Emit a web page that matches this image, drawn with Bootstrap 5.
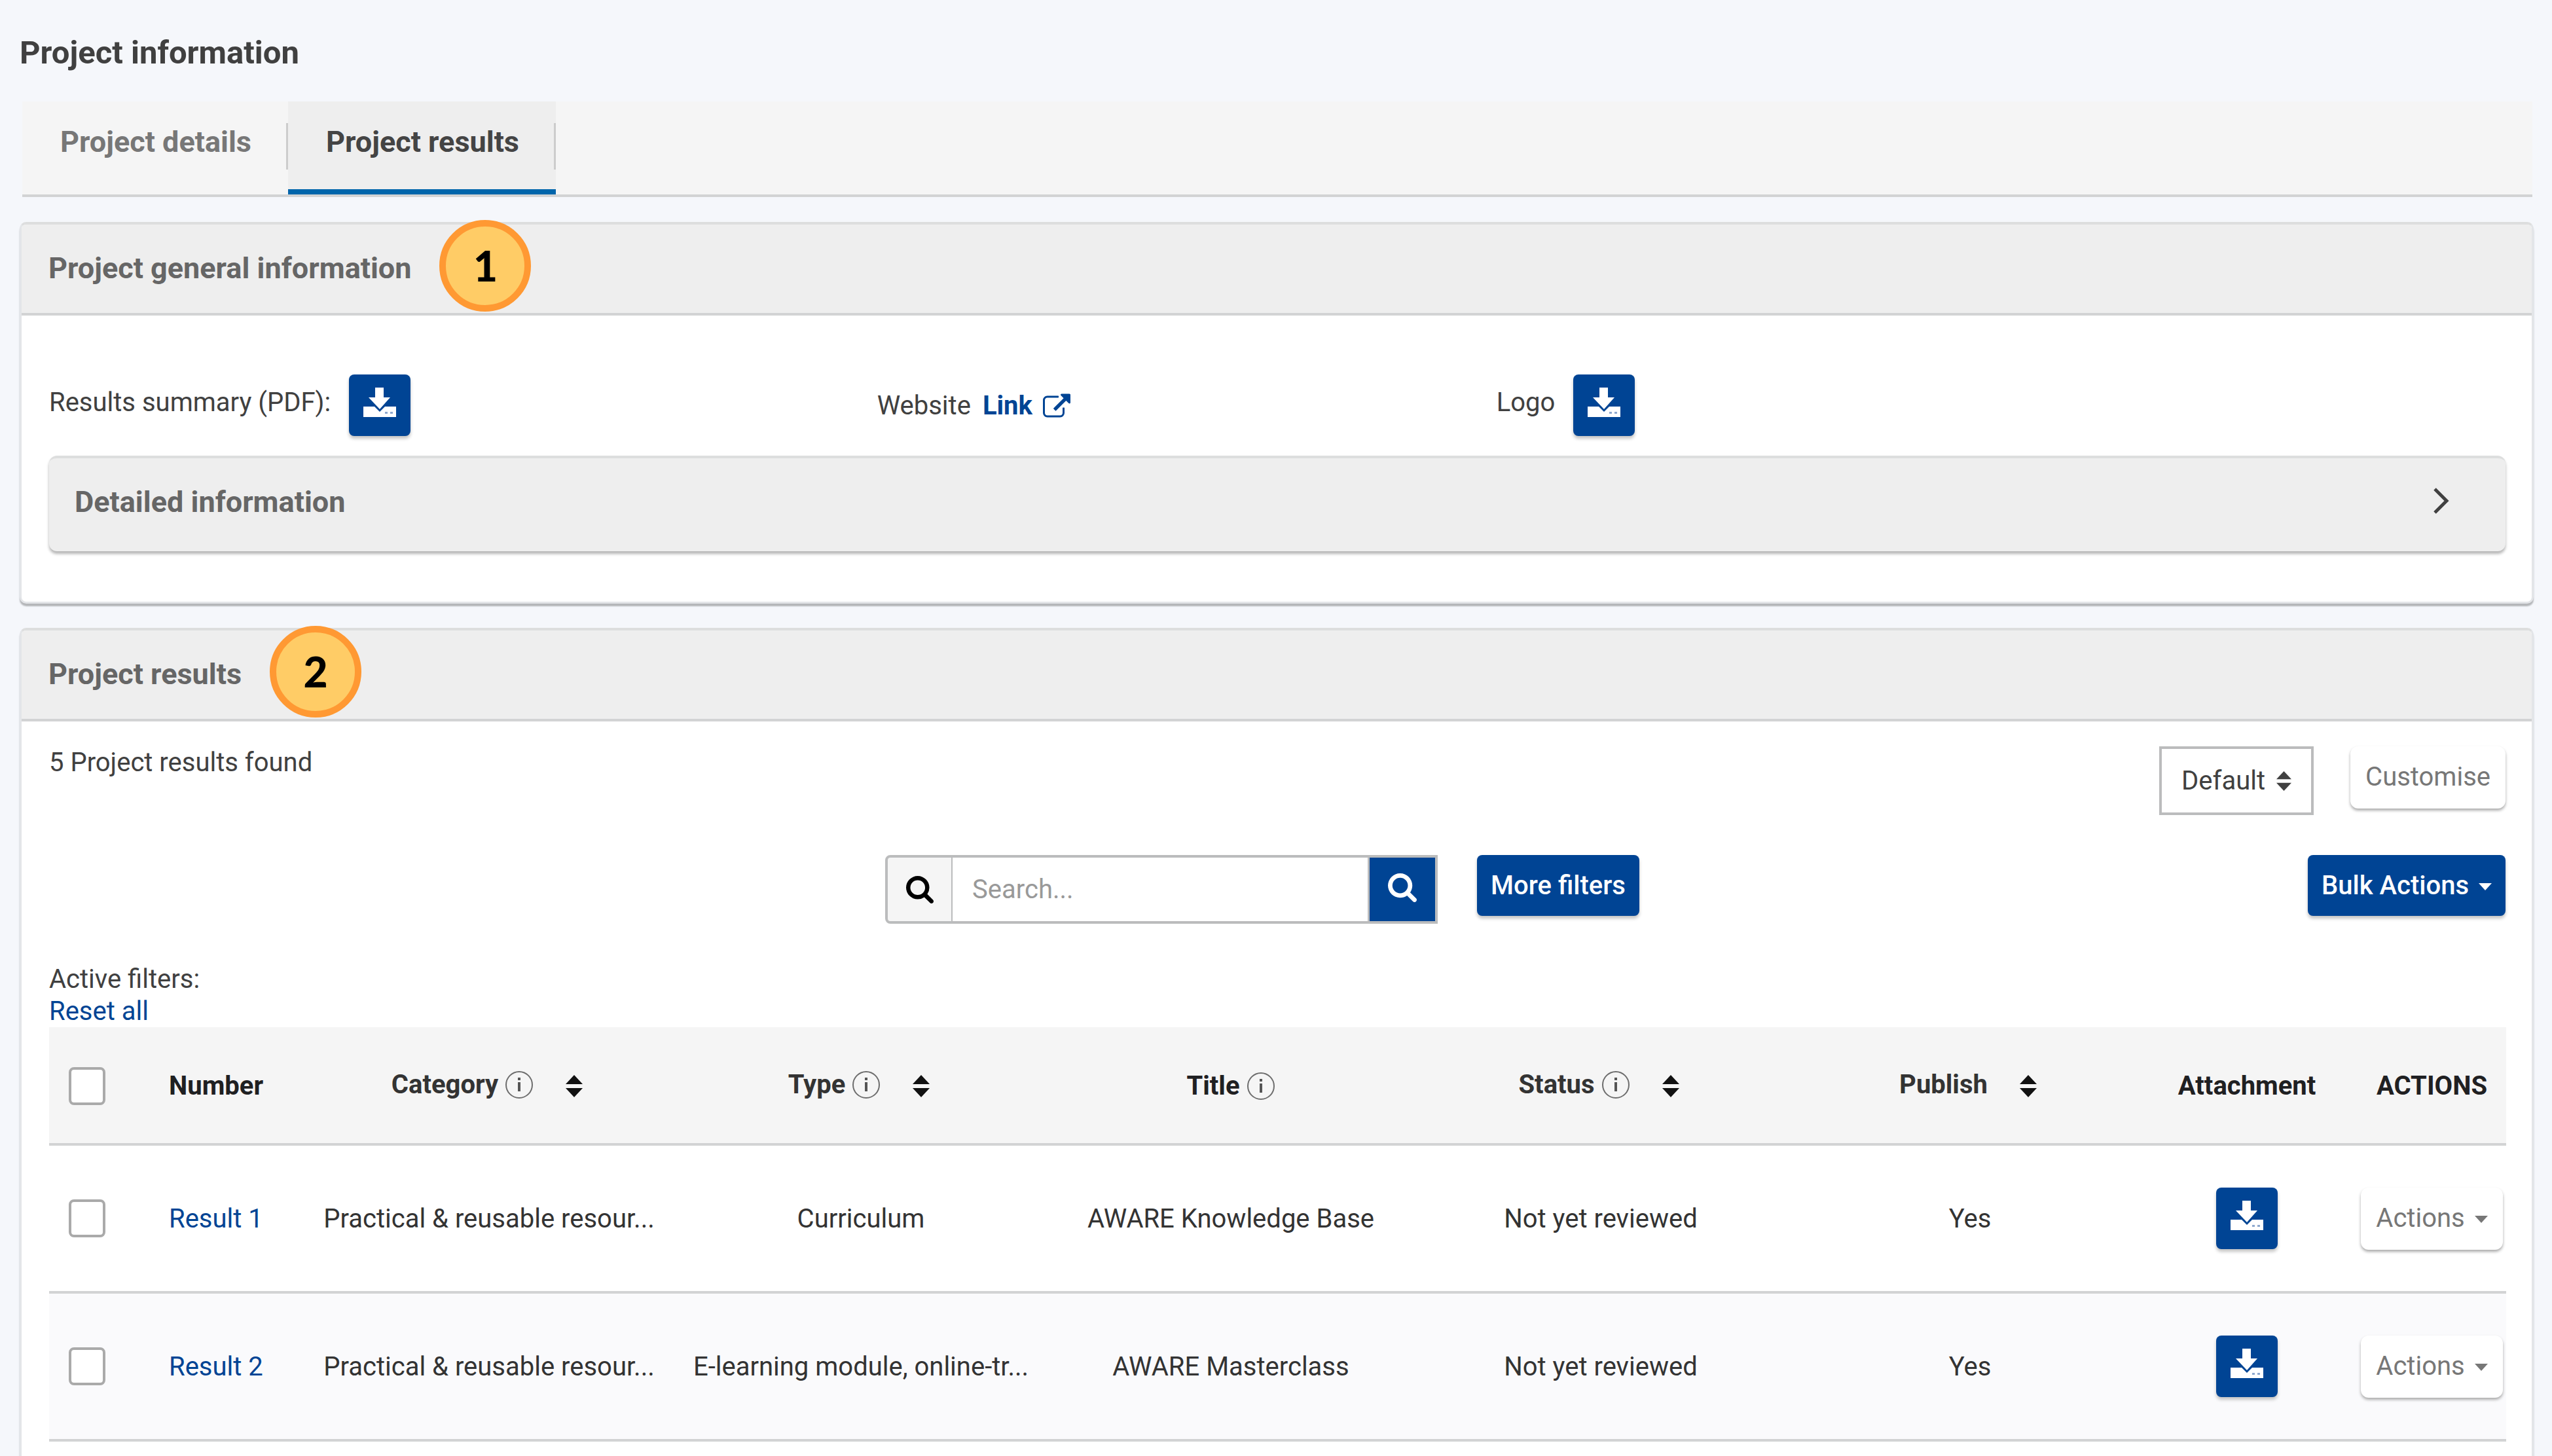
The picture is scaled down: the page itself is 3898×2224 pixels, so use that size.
<!DOCTYPE html>
<html lang="en">
<head>
<meta charset="utf-8">
<meta name="viewport" content="width=device-width, initial-scale=1">
<title>Project information</title>
<link href="https://cdn.jsdelivr.net/npm/bootstrap@5.3.0/dist/css/bootstrap.min.css" rel="stylesheet">
<style>
  :root { --brand: #004494; --line: #d2d3d4; --field: #bbbcbd; --ink: #404040; }
  body { background: #f5f7fb; color: var(--ink); font-family: Roboto, "Liberation Sans", sans-serif; font-size: 40px; line-height: 49px; padding: 53px 28px 0 30px; }
  a { color: var(--brand); text-decoration: none; }
  .page-title { font-size: 49px; line-height: 56px; font-weight: 700; margin: 0 0 46px; }
  .section-title { font-size: 45px; line-height: 56px; font-weight: 700; color: #666; margin: 0; }

  /* tabs */
  .tab-strip { background: #f5f5f5; border-bottom: 4px solid var(--line); margin: 0 2px 38px 4px; }
  .tab-strip .nav-link { position: relative; height: 142px; padding: 34px 56px 0 58px; font-size: 45px; line-height: 56px; font-weight: 700; color: #777; }
  .tab-strip .nav-link::after { content: ""; position: absolute; right: 0; top: 33px; width: 3px; height: 71px; background: #ccc; }
  .tab-strip .nav-link.active { color: #444; background: #eee; border-bottom: 8px solid #0065ab; }

  /* panels */
  .panel { background: #fff; border: 3px solid #e3e5e8; border-top: 4px solid #dddede; border-radius: 10px; box-shadow: 0 4px 2px #b4b6b9; }
  .panel + .panel { margin-top: 37px; }
  .panel-top { background: #eee; border-bottom: 4px solid var(--line); border-radius: 6px 6px 0 0; padding: 39px 40px 40px 41px; }
  .panel-inner { padding: 0 40px 0 42px; }
  .step { position: absolute; left: 100%; top: calc(50% - 74px); width: 140px; height: 140px; margin-left: 43px; border: 10px solid #ff9933; border-radius: 50%; background: #ffcc66; color: #000; font: 900 64px/120px Lato, sans-serif; text-align: center; }
  .facts { display: grid; grid-template-columns: 1266fr 947fr 1543fr; align-items: center; padding: 90px 0 30px; }
  .fact { display: flex; align-items: center; gap: 28px; }
  .fact > .raised { padding-bottom: 10px; }
  .fact-link { gap: 18px; }
  .fold { display: flex; justify-content: space-between; align-items: flex-start; width: 100%; height: 146px; padding: 39px 84px 0 39px; border: 0 solid #dddede; border-top-width: 4px; border-radius: 12px; background: #eee; box-shadow: 0 4px 4px #b5b5b5; margin-bottom: 77px; text-align: left; }

  /* buttons */
  .act { font-size: 40px; line-height: 49px; border: 0; border-radius: 8px; padding: 22px 21px; white-space: nowrap; }
  .act-main { background: var(--brand); color: #fff; font-weight: 500; box-shadow: 0 4px 5px #c4c4c4; }
  .act-plain { background: #fff; color: #777; padding: 22px 23px 24px; border-radius: 12px; box-shadow: 0 3px 4px #aaa; }
  .act-icon { width: 94px; height: 94px; padding: 20px 0 29px; }
  .act-icon svg { display: block; margin: 0 auto; }
  .act.dropdown-toggle::after { border-top: 11px solid; border-right: 10px solid transparent; border-left: 10px solid transparent; margin-left: 15px; vertical-align: 6px; }

  /* list tools */
  .tools { padding-top: 38px; }
  .picker { position: relative; margin-right: 56px; }
  .picker select { appearance: none; width: 236px; height: 105px; border: 4px solid var(--field); background: #fff; color: var(--ink); padding: 0 30px; }
  .picker svg { position: absolute; right: 34px; top: 37px; pointer-events: none; }
  .finder-row { display: grid; grid-template-columns: 1fr auto 1fr; align-items: start; padding-top: 61px; }
  .finder { width: 844px; height: 105px; flex-wrap: nowrap; }
  .finder .input-group-text { width: 104px; justify-content: center; background: #f5f5f5; border: 4px solid var(--field); border-radius: 8px 0 0 8px; border-right-width: 3px; color: #000; }
  .finder .form-control { font-size: 40px; border: 4px solid var(--field); border-left: 0; padding: 0 30px; color: var(--ink); }
  .finder .form-control::placeholder { color: #999; }
  .finder .btn { width: 104px; padding: 0 0 6px; background: var(--brand); color: #fff; border: 4px solid var(--field); border-left: 0; border-radius: 0; }
  .more { margin: 0 46px 0 60px; }
  .filters { padding-top: 60px; }

  /* results table */
  .results { table-layout: fixed; border-collapse: separate; border-spacing: 0; width: 100%; margin: 0; color: #333; }
  .results th, .results td { text-align: center; vertical-align: middle; padding: 0; border-bottom: 4px solid var(--line); white-space: nowrap; }
  .results th { height: 181px; padding-top: 2px; background: #f5f5f5; color: #1f2022; font-weight: 700; }
  .results td { height: 226px; background: #fff; }
  .results tbody tr:nth-child(even) td { background: #fafafc; }
  .results .start { text-align: left; }
  .results .pick { text-align: left; padding-left: 30px; }
  .results .form-check-input { display: block; width: 56px; height: 58px; margin: 0; border: 4px solid #aaa; border-radius: 8px; background-color: #fff; }
  .head { display: inline-flex; align-items: center; color: inherit; }
  .head svg.info { margin-left: 10px; }
  .head-sort { color: #333; font-weight: 700; padding: 0 6px 4px 0; border: 0; background: none; }
  .head-sort svg.sort { margin: 5px 0 0 49px; color: #111; }
</style>
</head>
<body class="d-flex flex-column min-vh-100">

<svg class="d-none" aria-hidden="true">
  <symbol id="i-download" viewBox="0 0 50 45">
    <path fill="currentColor" d="M18 0h13v15h10L25 33 8 15h10zM0 29h17l8 8 8-8h17v16H0z"/>
    <path fill="#8fa9cf" d="M33 37h4v3h-4zM41 37h4v3h-4z"/>
  </symbol>
  <symbol id="i-search" viewBox="64 128 1664 1664">
    <path fill="currentColor" d="M1216 832q0-185-131.500-316.500t-316.500-131.500-316.500 131.500-131.500 316.500 131.500 316.500 316.500 131.500 316.500-131.500 131.500-316.500zm512 832q0 52-38 90t-90 38q-54 0-90-38l-343-342q-179 124-399 124-143 0-273.500-55.500t-225-150-150-225-55.500-273.500 55.500-273.500 150-225 225-150 273.500-55.500 273.500 55.500 225 150 150 225 55.500 273.500q0 220-124 399l343 343q37 37 37 90z"/>
  </symbol>
  <symbol id="i-info" viewBox="0 0 44 44">
    <circle cx="22" cy="22" r="20" fill="none" stroke="#6d6d6d" stroke-width="2"/>
    <path fill="#555" d="M20 11h4v4h-4zM20 18h4v14h-4z"/>
  </symbol>
  <symbol id="i-sort" viewBox="0 0 26 34">
    <path fill="currentColor" d="M13 0l13 14H0zM13 34L0 20h26z"/>
  </symbol>
</svg>

<h1 class="page-title">Project information</h1>

<nav class="nav tab-strip" aria-label="Project">
  <a class="nav-link" href="#details">Project details</a>
  <a class="nav-link active" href="#results" aria-current="page">Project results</a>
</nav>

<section class="panel">
  <header class="panel-top d-flex">
    <h2 class="section-title position-relative">Project general information<span class="step">1</span></h2>
  </header>
  <div class="panel-inner">
    <div class="facts">
      <div class="fact">
        <span class="raised">Results summary (PDF):</span>
        <button type="button" class="btn act act-main act-icon" aria-label="Download results summary"><svg width="50" height="45"><use href="#i-download"/></svg></button>
      </div>
      <div class="fact fact-link">
        <span>Website</span>
        <a href="#website" class="fw-bold d-flex align-items-center">Link
          <svg class="ms-3" width="42" height="37" viewBox="0 0 1792 1536" aria-hidden="true"><path fill="currentColor" d="M1408 928v320q0 119-84.500 203.500t-203.500 84.500h-832q-119 0-203.500-84.500t-84.500-203.500v-832q0-119 84.500-203.500t203.500-84.500h704q14 0 23 9t9 23v64q0 14-9 23t-23 9h-704q-66 0-113 47t-47 113v832q0 66 47 113t113 47h832q66 0 113-47t47-113v-320q0-14 9-23t23-9h64q14 0 23 9t9 23zm384-864v512q0 26-19 45t-45 19-45-19l-176-176-652 652q-10 10-23 10t-23-10l-114-114q-10-10-10-23t10-23l652-652-176-176q-19-19-19-45t19-45 45-19h512q26 0 45 19t19 45z"/></svg></a>
      </div>
      <div class="fact">
        <span class="raised">Logo</span>
        <button type="button" class="btn act act-main act-icon" aria-label="Download logo"><svg width="50" height="45"><use href="#i-download"/></svg></button>
      </div>
    </div>
    <button type="button" class="fold" aria-expanded="false">
      <span class="section-title">Detailed information</span>
      <svg class="mt-1" width="28" height="44" viewBox="0 0 28 44" aria-hidden="true"><path d="M4 4l18 18L4 40" fill="none" stroke="#404040" stroke-width="5"/></svg>
    </button>
  </div>
</section>

<section class="panel flex-grow-1 border-bottom-0 rounded-bottom-0">
  <header class="panel-top d-flex">
    <h2 class="section-title position-relative">Project results<span class="step">2</span></h2>
  </header>
  <div class="panel-inner">
    <div class="tools d-flex align-items-start">
      <div class="me-auto">5 Project results found</div>
      <div class="picker">
        <select aria-label="View"><option>Default</option></select>
        <svg width="23" height="32"><use href="#i-sort"/></svg>
      </div>
      <button type="button" class="btn act act-plain">Customise</button>
    </div>

    <div class="finder-row">
      <div></div>
      <form class="d-flex align-items-start">
        <div class="input-group finder">
          <label class="input-group-text" for="q" aria-label="Search"><svg width="42" height="42"><use href="#i-search"/></svg></label>
          <input id="q" type="text" class="form-control" placeholder="Search...">
          <button type="submit" class="btn" aria-label="Search"><svg width="44" height="44"><use href="#i-search"/></svg></button>
        </div>
        <button type="button" class="btn act act-main more">More filters</button>
      </form>
      <div class="text-end"><button type="button" class="btn act act-main dropdown-toggle">Bulk Actions</button></div>
    </div>

    <div class="filters">
      <div>Active filters:</div>
      <a href="#reset">Reset all</a>
    </div>

    <table class="results">
      <colgroup>
        <col style="width:183px"><col style="width:231px"><col style="width:516px"><col style="width:620px"><col style="width:510px"><col style="width:620px"><col style="width:508px"><col style="width:338px"><col style="width:227px">
      </colgroup>
      <thead>
        <tr>
          <th class="pick"><input class="form-check-input" type="checkbox" aria-label="Select all"></th>
          <th class="start">Number</th>
          <th><button type="button" class="head head-sort">Category<svg class="info" width="44" height="44"><use href="#i-info"/></svg><svg class="sort" width="26" height="34"><use href="#i-sort"/></svg></button></th>
          <th><button type="button" class="head head-sort">Type<svg class="info" width="44" height="44"><use href="#i-info"/></svg><svg class="sort" width="26" height="34"><use href="#i-sort"/></svg></button></th>
          <th><span class="head">Title<svg class="info" width="44" height="44"><use href="#i-info"/></svg></span></th>
          <th><button type="button" class="head head-sort">Status<svg class="info" width="44" height="44"><use href="#i-info"/></svg><svg class="sort" width="26" height="34"><use href="#i-sort"/></svg></button></th>
          <th><button type="button" class="head head-sort">Publish<svg class="sort" width="26" height="34"><use href="#i-sort"/></svg></button></th>
          <th>Attachment</th>
          <th>ACTIONS</th>
        </tr>
      </thead>
      <tbody>
        <tr>
          <td class="pick"><input class="form-check-input" type="checkbox" aria-label="Select Result 1"></td>
          <td class="start"><a href="#r1">Result 1</a></td>
          <td>Practical &amp; reusable resour...</td>
          <td>Curriculum</td>
          <td>AWARE Knowledge Base</td>
          <td>Not yet reviewed</td>
          <td>Yes</td>
          <td><button type="button" class="btn act act-main act-icon" aria-label="Download attachment"><svg width="50" height="45"><use href="#i-download"/></svg></button></td>
          <td><button type="button" class="btn act act-plain dropdown-toggle">Actions</button></td>
        </tr>
        <tr>
          <td class="pick"><input class="form-check-input" type="checkbox" aria-label="Select Result 2"></td>
          <td class="start"><a href="#r2">Result 2</a></td>
          <td>Practical &amp; reusable resour...</td>
          <td>E-learning module, online-tr...</td>
          <td>AWARE Masterclass</td>
          <td>Not yet reviewed</td>
          <td>Yes</td>
          <td><button type="button" class="btn act act-main act-icon" aria-label="Download attachment"><svg width="50" height="45"><use href="#i-download"/></svg></button></td>
          <td><button type="button" class="btn act act-plain dropdown-toggle">Actions</button></td>
        </tr>
      </tbody>
    </table>
  </div>
</section>

<script src="https://cdn.jsdelivr.net/npm/bootstrap@5.3.0/dist/js/bootstrap.bundle.min.js"></script>
</body>
</html>
